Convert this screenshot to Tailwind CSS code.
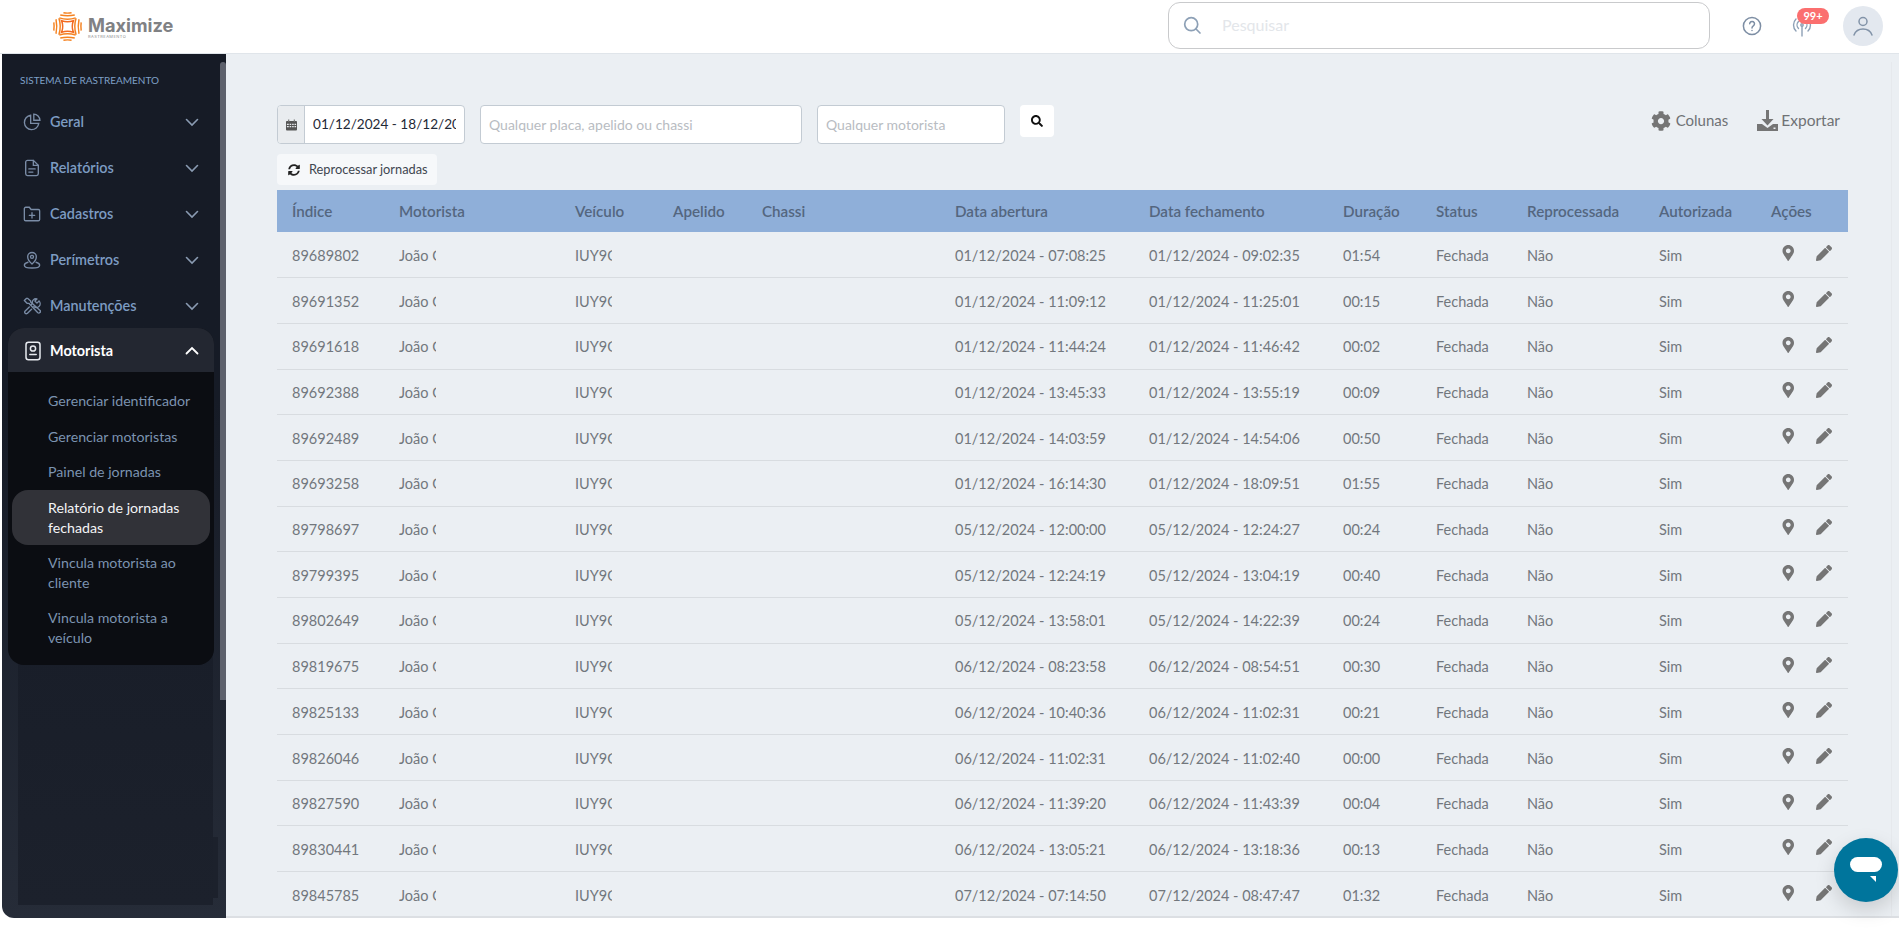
<!DOCTYPE html>
<html lang="pt">
<head>
<meta charset="utf-8">
<script src="https://cdn.jsdelivr.net/npm/@tailwindcss/browser@4"></script>
</head>
<body class="bg-white font-['Lato','Liberation_Sans',sans-serif]">
<div class="relative w-[1899px] h-[929px] overflow-hidden flex flex-col">
  <header class="h-[54px] shrink-0 flex items-center border-b border-[#e0e5ea] bg-white">
    <div class="ml-[53px] flex items-center gap-[6px] w-[1115px]">
      <svg class="w-[29px] h-[29px]" viewBox="0 0 32 32" fill="none" stroke="#f58220" stroke-width="1.600" stroke-linecap="butt">
        <path d="M9.500 9.500 Q16 12 22.500 9.500 Q20 16 22.500 22.500 Q16 20 9.500 22.500 Q12 16 9.500 9.500Z" stroke="#f26a21" stroke-width="1.700"/>
        <path d="M7 6.500 Q16 9.500 25 6.500M8 3.300 Q16 5 24 3.300M11.500 .9 Q16 1.600 20.500 .9"/>
        <path d="M7 25.500 Q16 22.500 25 25.500M8 28.700 Q16 27 24 28.700M11.500 31.100 Q16 30.400 20.500 31.100"/>
        <path d="M6.500 7 Q9.500 16 6.500 25M3.300 8 Q5 16 3.300 24M.9 11.500 Q1.600 16 .9 20.500"/>
        <path d="M25.500 7 Q22.500 16 25.500 25M28.700 8 Q27 16 28.700 24M31.100 11.500 Q30.400 16 31.100 20.500"/>
      </svg>
      <div class="flex flex-col leading-none">
        <span class="font-['Inter'] font-bold text-[18.200px] leading-[20px] text-[#808184]">Maximize</span>
        <span class="font-['Inter'] text-[4px] leading-[4px] text-[#8b8c8f] tracking-[0.45px]">RASTREAMENTO</span>
      </div>
    </div>
    <div class="w-[542px] h-[47px] -mt-[3px] flex items-center rounded-xl border border-[#c9cacc] bg-white pl-[13px]">
      <svg class="w-[20px] h-[20px]" viewBox="0 0 20 20" fill="none" stroke="#8da0b6" stroke-width="1.700" stroke-linecap="round"><circle cx="9.200" cy="9.200" r="6.500"/><path d="M14 14l4 4"/></svg>
      <span class="ml-[20px] text-[16px] text-[#e3e6ea]">Pesquisar</span>
    </div>
    <div class="relative flex-1 h-full">
      <svg class="absolute left-[32px] top-[16px] w-[20px] h-[20px]" viewBox="0 0 20 20" fill="none" stroke="#7d8ea4" stroke-width="1.500" stroke-linecap="round"><circle cx="10" cy="10" r="8.600"/><path d="M7.700 7.800a2.400 2.400 0 1 1 3.600 2.100c-.8.500-1.300 1-1.300 2"/><path d="M10 14.400v.1"/></svg>
      <svg class="absolute left-[82px] top-[17px] w-[20px] h-[20px]" viewBox="0 0 20 20" fill="none" stroke="#8da0b6" stroke-width="1.400" stroke-linecap="round"><path d="M10 9v10"/><circle cx="10" cy="8" r="1.200"/><path d="M6.500 11.500a5 5 0 0 1 0-7M13.500 4.500a5 5 0 0 1 0 7M4 14a8.500 8.500 0 0 1 0-12M16 2a8.500 8.500 0 0 1 0 12"/></svg>
      <span class="absolute left-[87px] top-[8px] w-[32px] h-[16px] rounded-full bg-[#fb6f6f] text-white text-[11px] font-bold leading-[16px] text-center">99+</span>
      <div class="absolute left-[133px] top-[6px] w-[40px] h-[40px] rounded-full bg-[#e3e8ef] flex items-center justify-center">
        <svg class="w-[24px] h-[24px]" viewBox="0 0 24 24" fill="none" stroke="#8293a8" stroke-width="1.500" stroke-linecap="round"><circle cx="12" cy="7.500" r="4"/><path d="M3 21c1.500-4 5-6 9-6s7.500 2 9 6"/></svg>
      </div>
    </div>
  </header>

  <div class="flex h-[864px] ml-[2px]">
    <aside class="relative w-[224px] h-full rounded-bl-xl bg-gradient-to-b from-[#161b26] from-40% to-[#262c38] overflow-hidden">
      <div class="absolute left-[16px] top-[0px] bottom-[13px] w-[195px] bg-gradient-to-b from-[#161b26] from-40% to-[#1c212c]"></div>
      <div class="absolute left-[211px] top-[783px] h-[61px] w-[5px] bg-[#1c212c]"></div>
      <div class="absolute right-0 top-[8px] h-[638px] w-[6px] rounded-t bg-[#5d616c]"></div>
      <div class="relative w-[218px]">
        <p class="pl-[18px] pt-[19px] h-[44px] text-[10px] leading-[14px] text-[#7fa0c7]">SISTEMA DE RASTREAMENTO</p>
        <nav class="flex flex-col text-[14.400px] font-semibold text-[#7d9cc2]">
          <a class="h-[46px] pt-[1px] flex items-center pl-[21px] pr-[21px]">
            <svg class="w-[18px] h-[18px]" viewBox="0 0 20 20" fill="none" stroke="#7a8ca6" stroke-width="1.500"><path d="M8.500 2.500a8 8 0 1 0 9 9h-9z"/><path d="M12 1.200a7 7 0 0 1 6.800 6.800H12z"/></svg>
            <span class="ml-[9px] flex-1">Geral</span>
            <svg class="w-[14px] h-[14px]" viewBox="0 0 14 14" fill="none" stroke="#8a9bb2" stroke-width="1.600" stroke-linecap="round"><path d="M1.500 4.500L7 10l5.500-5.500"/></svg>
          </a>
          <a class="h-[46px] pt-[1px] flex items-center pl-[21px] pr-[21px]">
            <svg class="w-[18px] h-[18px]" viewBox="0 0 20 20" fill="none" stroke="#7a8ca6" stroke-width="1.500" stroke-linecap="round"><path d="M5 1.500h6.500L17 7v9.500a2 2 0 0 1-2 2H5a2 2 0 0 1-2-2v-13a2 2 0 0 1 2-2z"/><path d="M11.500 1.500V7H17M6.500 11h7M6.500 14.500h4.500"/></svg>
            <span class="ml-[9px] flex-1">Relatórios</span>
            <svg class="w-[14px] h-[14px]" viewBox="0 0 14 14" fill="none" stroke="#8a9bb2" stroke-width="1.600" stroke-linecap="round"><path d="M1.500 4.500L7 10l5.500-5.500"/></svg>
          </a>
          <a class="h-[46px] pt-[1px] flex items-center pl-[21px] pr-[21px]">
            <svg class="w-[18px] h-[18px]" viewBox="0 0 20 20" fill="none" stroke="#7a8ca6" stroke-width="1.500" stroke-linecap="round"><path d="M1.500 4a1.500 1.500 0 0 1 1.500-1.500h4l2 2.500h8a1.500 1.500 0 0 1 1.500 1.500v9.500a1.500 1.500 0 0 1-1.500 1.500H3a1.500 1.500 0 0 1-1.500-1.500z"/><path d="M10 8.500v6M7 11.500h6"/></svg>
            <span class="ml-[9px] flex-1">Cadastros</span>
            <svg class="w-[14px] h-[14px]" viewBox="0 0 14 14" fill="none" stroke="#8a9bb2" stroke-width="1.600" stroke-linecap="round"><path d="M1.500 4.500L7 10l5.500-5.500"/></svg>
          </a>
          <a class="h-[46px] pt-[1px] flex items-center pl-[21px] pr-[21px]">
            <svg class="w-[18px] h-[18px]" viewBox="0 0 20 20" fill="none" stroke="#7a8ca6" stroke-width="1.500" stroke-linecap="round"><path d="M10 14.500S5.200 10.500 5.200 6.500a4.800 4.800 0 0 1 9.600 0c0 4-4.800 8-4.800 8z"/><circle cx="10" cy="6.500" r="1.700"/><path d="M5.500 12.500C3 13.200 1.500 14.300 1.500 15.700c0 1.800 3.800 3.200 8.500 3.200s8.500-1.400 8.500-3.200c0-1.400-1.500-2.500-4-3.200"/></svg>
            <span class="ml-[9px] flex-1">Perímetros</span>
            <svg class="w-[14px] h-[14px]" viewBox="0 0 14 14" fill="none" stroke="#8a9bb2" stroke-width="1.600" stroke-linecap="round"><path d="M1.500 4.500L7 10l5.500-5.500"/></svg>
          </a>
          <a class="h-[46px] pt-[1px] flex items-center pl-[21px] pr-[21px]">
            <svg class="w-[18px] h-[18px]" viewBox="0 0 20 20" fill="none" stroke="#7a8ca6" stroke-width="1.500" stroke-linecap="round" stroke-linejoin="round"><path d="M4 1.500L1.500 4l3 3h2l10 10.500a1.800 1.800 0 0 0 2.500-2.500L8.500 5.500v-1L5 1.500z"/><path d="M17.800 4.500l-2.300 2.300-2.300-2.300 2.300-2.300a4 4 0 0 0-5 5L9 8.500M7 11L2.200 15.800a1.800 1.800 0 0 0 2.500 2.500L9.500 13.500M12 10.500a4 4 0 0 0 5.800-6"/></svg>
            <span class="ml-[9px] flex-1">Manutenções</span>
            <svg class="w-[14px] h-[14px]" viewBox="0 0 14 14" fill="none" stroke="#8a9bb2" stroke-width="1.600" stroke-linecap="round"><path d="M1.500 4.500L7 10l5.500-5.500"/></svg>
          </a>
          <div class="ml-[6px] w-[206px] rounded-2xl bg-[#0b0d12] h-[337px]">
            <a class="h-[44px] pt-[2px] flex items-center pl-[15px] pr-[15px] rounded-t-2xl bg-[#232731] text-white font-bold">
              <svg class="w-[20px] h-[20px]" viewBox="0 0 20 20" fill="none" stroke="#e8ebf0" stroke-width="1.500" stroke-linecap="round"><rect x="3" y="1.200" width="14" height="17.600" rx="2.500"/><circle cx="10" cy="7.500" r="2.600"/><path d="M6.800 13.500h6.400"/></svg>
              <span class="ml-[7px] flex-1">Motorista</span>
              <svg class="w-[14px] h-[14px]" viewBox="0 0 14 14" fill="none" stroke="#ffffff" stroke-width="1.800" stroke-linecap="round"><path d="M1.500 9.500L7 4l5.500 5.500"/></svg>
            </a>
            <ul class="pt-[11px] text-[14.200px] leading-[20px] font-normal text-[#7c93b0]">
              <li class="h-[36px] pl-[40px] flex items-center">Gerenciar identificador</li>
              <li class="h-[35px] pl-[40px] flex items-center">Gerenciar motoristas</li>
              <li class="h-[35px] pl-[40px] flex items-center">Painel de jornadas</li>
              <li class="mx-[4px] mt-[1px] h-[55px] pl-[36px] pr-[8px] flex items-center rounded-2xl bg-[#313238] text-[#f4f5f7]">Relatório de jornadas fechadas</li>
              <li class="h-[55px] pl-[40px] pr-[20px] flex items-center">Vincula motorista ao cliente</li>
              <li class="h-[55px] pl-[40px] pr-[20px] flex items-center">Vincula motorista a veículo</li>
            </ul>
          </div>
        </nav>
      </div>
    </aside>

    <main class="relative flex-1 h-[864px] bg-[#ebeff3] border-b-2 border-[#dcdfe3] overflow-hidden">
      <div class="absolute right-[7px] top-[8px] bottom-0 w-px bg-[#e6e9ed]"></div>
      <div class="ml-[51px] w-[1571px] pt-[51px]">
        <div class="flex items-start justify-between h-[49px]">
          <div class="flex items-start">
            <div class="flex w-[188px] h-[39px] rounded border border-[#c3cbd3] overflow-hidden bg-white">
              <span class="w-[27px] shrink-0 bg-[#e9ecef] border-r border-[#c3cbd3] flex items-center justify-center">
                <svg class="w-[11px] h-[12px]" viewBox="0 0 12 12" fill="#555"><path d="M0 2.500a1 1 0 0 1 1-1h10a1 1 0 0 1 1 1V11a1 1 0 0 1-1 1H1a1 1 0 0 1-1-1zM1 4.500v1.500h2V4.500zM4 4.500v1.500h1.700V4.500zM6.700 4.500v1.500H8.400V4.500zM9.300 4.500v1.500H11V4.500zM1 7v1.500h2V7zM4 7v1.500h1.700V7zM6.700 7v1.500H8.400V7zM9.300 7v1.500H11V7zM2.500 0h1v2h-1zM8.500 0h1v2h-1z" fill-rule="evenodd"/></svg>
              </span>
              <span class="ml-[8px] w-[143px] overflow-hidden whitespace-nowrap text-[13.600px] leading-[37px] text-[#1f2937]">01/12/2024 - 18/12/2024</span>
            </div>
            <div class="ml-[15px] w-[322px] h-[39px] rounded border border-[#c3cbd3] bg-white px-[8px] text-[14px] leading-[37px] text-[#b8bcc2]">Qualquer placa, apelido ou chassi</div>
            <div class="ml-[15px] w-[188px] h-[39px] rounded border border-[#c3cbd3] bg-white px-[8px] text-[14px] leading-[37px] text-[#b8bcc2]">Qualquer motorista</div>
            <div class="ml-[15px] w-[34px] h-[32px] rounded bg-white flex items-center justify-center">
              <svg class="w-[12px] h-[12px]" viewBox="0 0 512 512" fill="#111"><path d="M505 442.700L405.300 343c-4.500-4.500-10.600-7-17-7H372c27.600-35.300 44-79.700 44-128C416 93.100 322.900 0 208 0S0 93.100 0 208s93.100 208 208 208c48.300 0 92.700-16.400 128-44v16.300c0 6.400 2.500 12.500 7 17l99.700 99.700c9.400 9.400 24.600 9.400 33.900 0l28.300-28.300c9.400-9.400 9.400-24.600.1-34zM208 336c-70.700 0-128-57.200-128-128 0-70.700 57.200-128 128-128 70.700 0 128 57.200 128 128 0 70.700-57.200 128-128 128z"/></svg>
            </div>
          </div>
          <div class="flex items-center text-[15px] text-[#6f7275] pr-[8px] pt-[4px]">
            <svg class="w-[20px] h-[20px] mr-[5px]" viewBox="0 0 512 512" fill="#757575"><path d="M487.400 315.700l-42.600-24.600c4.300-23.200 4.300-47 0-70.200l42.600-24.600c4.900-2.800 7.100-8.600 5.500-14-11.100-35.600-30-67.800-54.700-94.600-3.800-4.100-10-5.100-14.800-2.300L380.800 110c-17.900-15.400-38.500-27.300-60.800-35.100V25.800c0-5.600-3.900-10.500-9.400-11.700-36.700-8.200-74.300-7.800-109.200 0-5.500 1.200-9.400 6.100-9.400 11.700V75c-22.200 7.900-42.800 19.800-60.800 35.100L88.700 85.500c-4.900-2.800-11-1.900-14.800 2.300-24.700 26.700-43.600 58.900-54.700 94.600-1.700 5.400.6 11.200 5.500 14L67.300 221c-4.300 23.200-4.300 47 0 70.200l-42.600 24.600c-4.900 2.800-7.100 8.600-5.500 14 11.100 35.600 30 67.800 54.700 94.600 3.800 4.100 10 5.100 14.800 2.300l42.600-24.600c17.900 15.400 38.500 27.300 60.800 35.100v49.200c0 5.600 3.900 10.500 9.400 11.700 36.700 8.200 74.300 7.800 109.200 0 5.500-1.200 9.400-6.100 9.400-11.700v-49.200c22.200-7.900 42.800-19.800 60.800-35.100l42.600 24.600c4.900 2.800 11 1.900 14.800-2.300 24.700-26.700 43.600-58.900 54.700-94.600 1.500-5.500-.7-11.300-5.600-14.100zM256 336c-44.100 0-80-35.900-80-80s35.900-80 80-80 80 35.900 80 80-35.900 80-80 80z"/></svg>
            <span>Colunas</span>
            <svg class="ml-[29px] mr-[3px] w-[21px] h-[21px]" viewBox="0 0 21 21" fill="#757575"><path d="M9 0h3v9h4.500l-6 6.500-6-6.500H9zM0 14h5l5.500 4 5.500-4h5v7H0zM16.500 17.500v1.500H18.500v-1.500z" fill-rule="evenodd"/></svg>
            <span class="text-[15.500px]">Exportar</span>
          </div>
        </div>
        <div class="h-[36px]">
          <div class="w-[160px] h-[31px] rounded bg-[#f6f8fa] flex items-center pl-[11px] text-[12.800px] text-[#3f4650]">
            <svg class="w-[12px] h-[12px] mr-[9px]" viewBox="0 0 512 512" fill="#222"><path d="M370.720 133.280C339.458 104.008 298.888 87.962 255.848 88c-77.458.068-144.328 53.178-162.791 126.850-1.344 5.363-6.122 9.150-11.651 9.150H24.103c-7.498 0-13.194-6.807-11.807-14.176C33.933 94.924 134.813 8 256 8c66.448 0 126.791 26.136 171.315 68.685L463.030 40.970C478.149 25.851 504 36.559 504 57.941V192c0 13.255-10.745 24-24 24H345.941c-21.382 0-32.090-25.851-16.971-40.971l41.750-41.749zM32 296h134.059c21.382 0 32.090 25.851 16.971 40.971l-41.750 41.750c31.262 29.273 71.835 45.319 114.876 45.280 77.418-.07 144.315-53.144 162.787-126.849 1.344-5.363 6.122-9.150 11.651-9.150h57.304c7.498 0 13.194 6.807 11.807 14.176C478.067 417.076 377.187 504 256 504c-66.448 0-126.791-26.136-171.315-68.685L48.970 471.030C33.851 486.149 8 475.441 8 454.059V320c0-13.255 10.745-24 24-24z"/></svg>
            Reprocessar jornadas
          </div>
        </div>
        <table class="w-[1571px] table-fixed border-collapse text-left text-[14.500px] text-[#72777d]">
          <thead>
            <tr class="h-[42px] bg-[#8fafd9] text-[#54667f] text-[15.200px]">
              <th class="w-[107px] pl-[15px] font-semibold">Índice</th>
              <th class="w-[176px] pl-[15px] font-semibold">Motorista</th>
              <th class="w-[98px] pl-[15px] font-semibold">Veículo</th>
              <th class="w-[89px] pl-[15px] font-semibold">Apelido</th>
              <th class="w-[193px] pl-[15px] font-semibold">Chassi</th>
              <th class="w-[194px] pl-[15px] font-semibold">Data abertura</th>
              <th class="w-[194px] pl-[15px] font-semibold">Data fechamento</th>
              <th class="w-[93px] pl-[15px] font-semibold">Duração</th>
              <th class="w-[91px] pl-[15px] font-semibold">Status</th>
              <th class="w-[132px] pl-[15px] font-semibold">Reprocessada</th>
              <th class="w-[111px] pl-[15px] font-semibold">Autorizada</th>
              <th class="w-[93px] pl-[16px] font-semibold">Ações</th>
            </tr>
          </thead>
          <tbody id="rows"></tbody>
        </table>
      </div>
    </main>
  </div>

  <div class="absolute left-[1834px] top-[838px] w-[64px] h-[64px] rounded-full bg-[#00759c] shadow-[0_8px_20px_rgba(0,0,0,0.15)] flex items-center justify-center">
    <svg class="w-[32px] h-[26px]" viewBox="0 0 32 26" fill="#fff"><rect x="0" y="0" width="32" height="15" rx="7.500"/><path d="M20 19h6v6z"/></svg>
  </div>
</div>
<script>
const data=[["89689802","01/12/2024 - 07:08:25","01/12/2024 - 09:02:35","01:54"],["89691352","01/12/2024 - 11:09:12","01/12/2024 - 11:25:01","00:15"],["89691618","01/12/2024 - 11:44:24","01/12/2024 - 11:46:42","00:02"],["89692388","01/12/2024 - 13:45:33","01/12/2024 - 13:55:19","00:09"],["89692489","01/12/2024 - 14:03:59","01/12/2024 - 14:54:06","00:50"],["89693258","01/12/2024 - 16:14:30","01/12/2024 - 18:09:51","01:55"],["89798697","05/12/2024 - 12:00:00","05/12/2024 - 12:24:27","00:24"],["89799395","05/12/2024 - 12:24:19","05/12/2024 - 13:04:19","00:40"],["89802649","05/12/2024 - 13:58:01","05/12/2024 - 14:22:39","00:24"],["89819675","06/12/2024 - 08:23:58","06/12/2024 - 08:54:51","00:30"],["89825133","06/12/2024 - 10:40:36","06/12/2024 - 11:02:31","00:21"],["89826046","06/12/2024 - 11:02:31","06/12/2024 - 11:02:40","00:00"],["89827590","06/12/2024 - 11:39:20","06/12/2024 - 11:43:39","00:04"],["89830441","06/12/2024 - 13:05:21","06/12/2024 - 13:18:36","00:13"],["89845785","07/12/2024 - 07:14:50","07/12/2024 - 08:47:47","01:32"]];
const pin='<svg class="w-[13px] h-[16px]" viewBox="0 0 384 512" fill="#757575"><path d="M172.268 501.670C26.970 291.031 0 262.429 0 184 0 82.381 82.381 0 184 0s184 82.381 184 184c0 78.429-26.970 107.031-172.268 317.670-9.535 13.774-29.930 13.773-39.464 0zM184 260c41.974 0 76-34.026 76-76s-34.026-76-76-76-76 34.026-76 76 34.026 76 76 76z"/></svg>';
const pen='<svg class="w-[16px] h-[16px] ml-[21px]" viewBox="0 0 512 512" fill="#757575"><path d="M497.900 142.100l-46.100 46.100c-4.700 4.700-12.300 4.700-17 0l-111-111c-4.700-4.700-4.700-12.300 0-17l46.100-46.100c18.700-18.700 49.100-18.700 67.900 0l60.100 60.100c18.800 18.700 18.800 49.100 0 67.900zM284.200 99.800L21.600 362.400.4 483.900c-2.900 16.400 11.400 30.600 27.800 27.800l121.500-21.300 262.600-262.600c4.700-4.700 4.700-12.300 0-17l-111-111c-4.800-4.700-12.400-4.700-17.100 0z"/></svg>';
document.getElementById('rows').innerHTML=data.map(d=>`<tr class="h-[45.7px] border-b border-[#d8dce0]"><td class="pl-[15px] pt-[2px]">${d[0]}</td><td class="pl-[15px] pt-[2px]"><span class="block w-[37px] overflow-hidden whitespace-nowrap">João Gomes</span></td><td class="pl-[15px] pt-[2px]"><span class="block w-[37px] overflow-hidden whitespace-nowrap">IUY9G12</span></td><td></td><td></td><td class="pl-[15px] pt-[2px]">${d[1]}</td><td class="pl-[15px] pt-[2px]">${d[2]}</td><td class="pl-[15px] pt-[2px]">${d[3]}</td><td class="pl-[15px] pt-[2px]">Fechada</td><td class="pl-[15px] pt-[2px]">Não</td><td class="pl-[15px] pt-[2px]">Sim</td><td class="pl-[27px]"><span class="flex items-center -mt-[3px]">${pin}${pen}</span></td></tr>`).join('');
</script>
</body>
</html>
